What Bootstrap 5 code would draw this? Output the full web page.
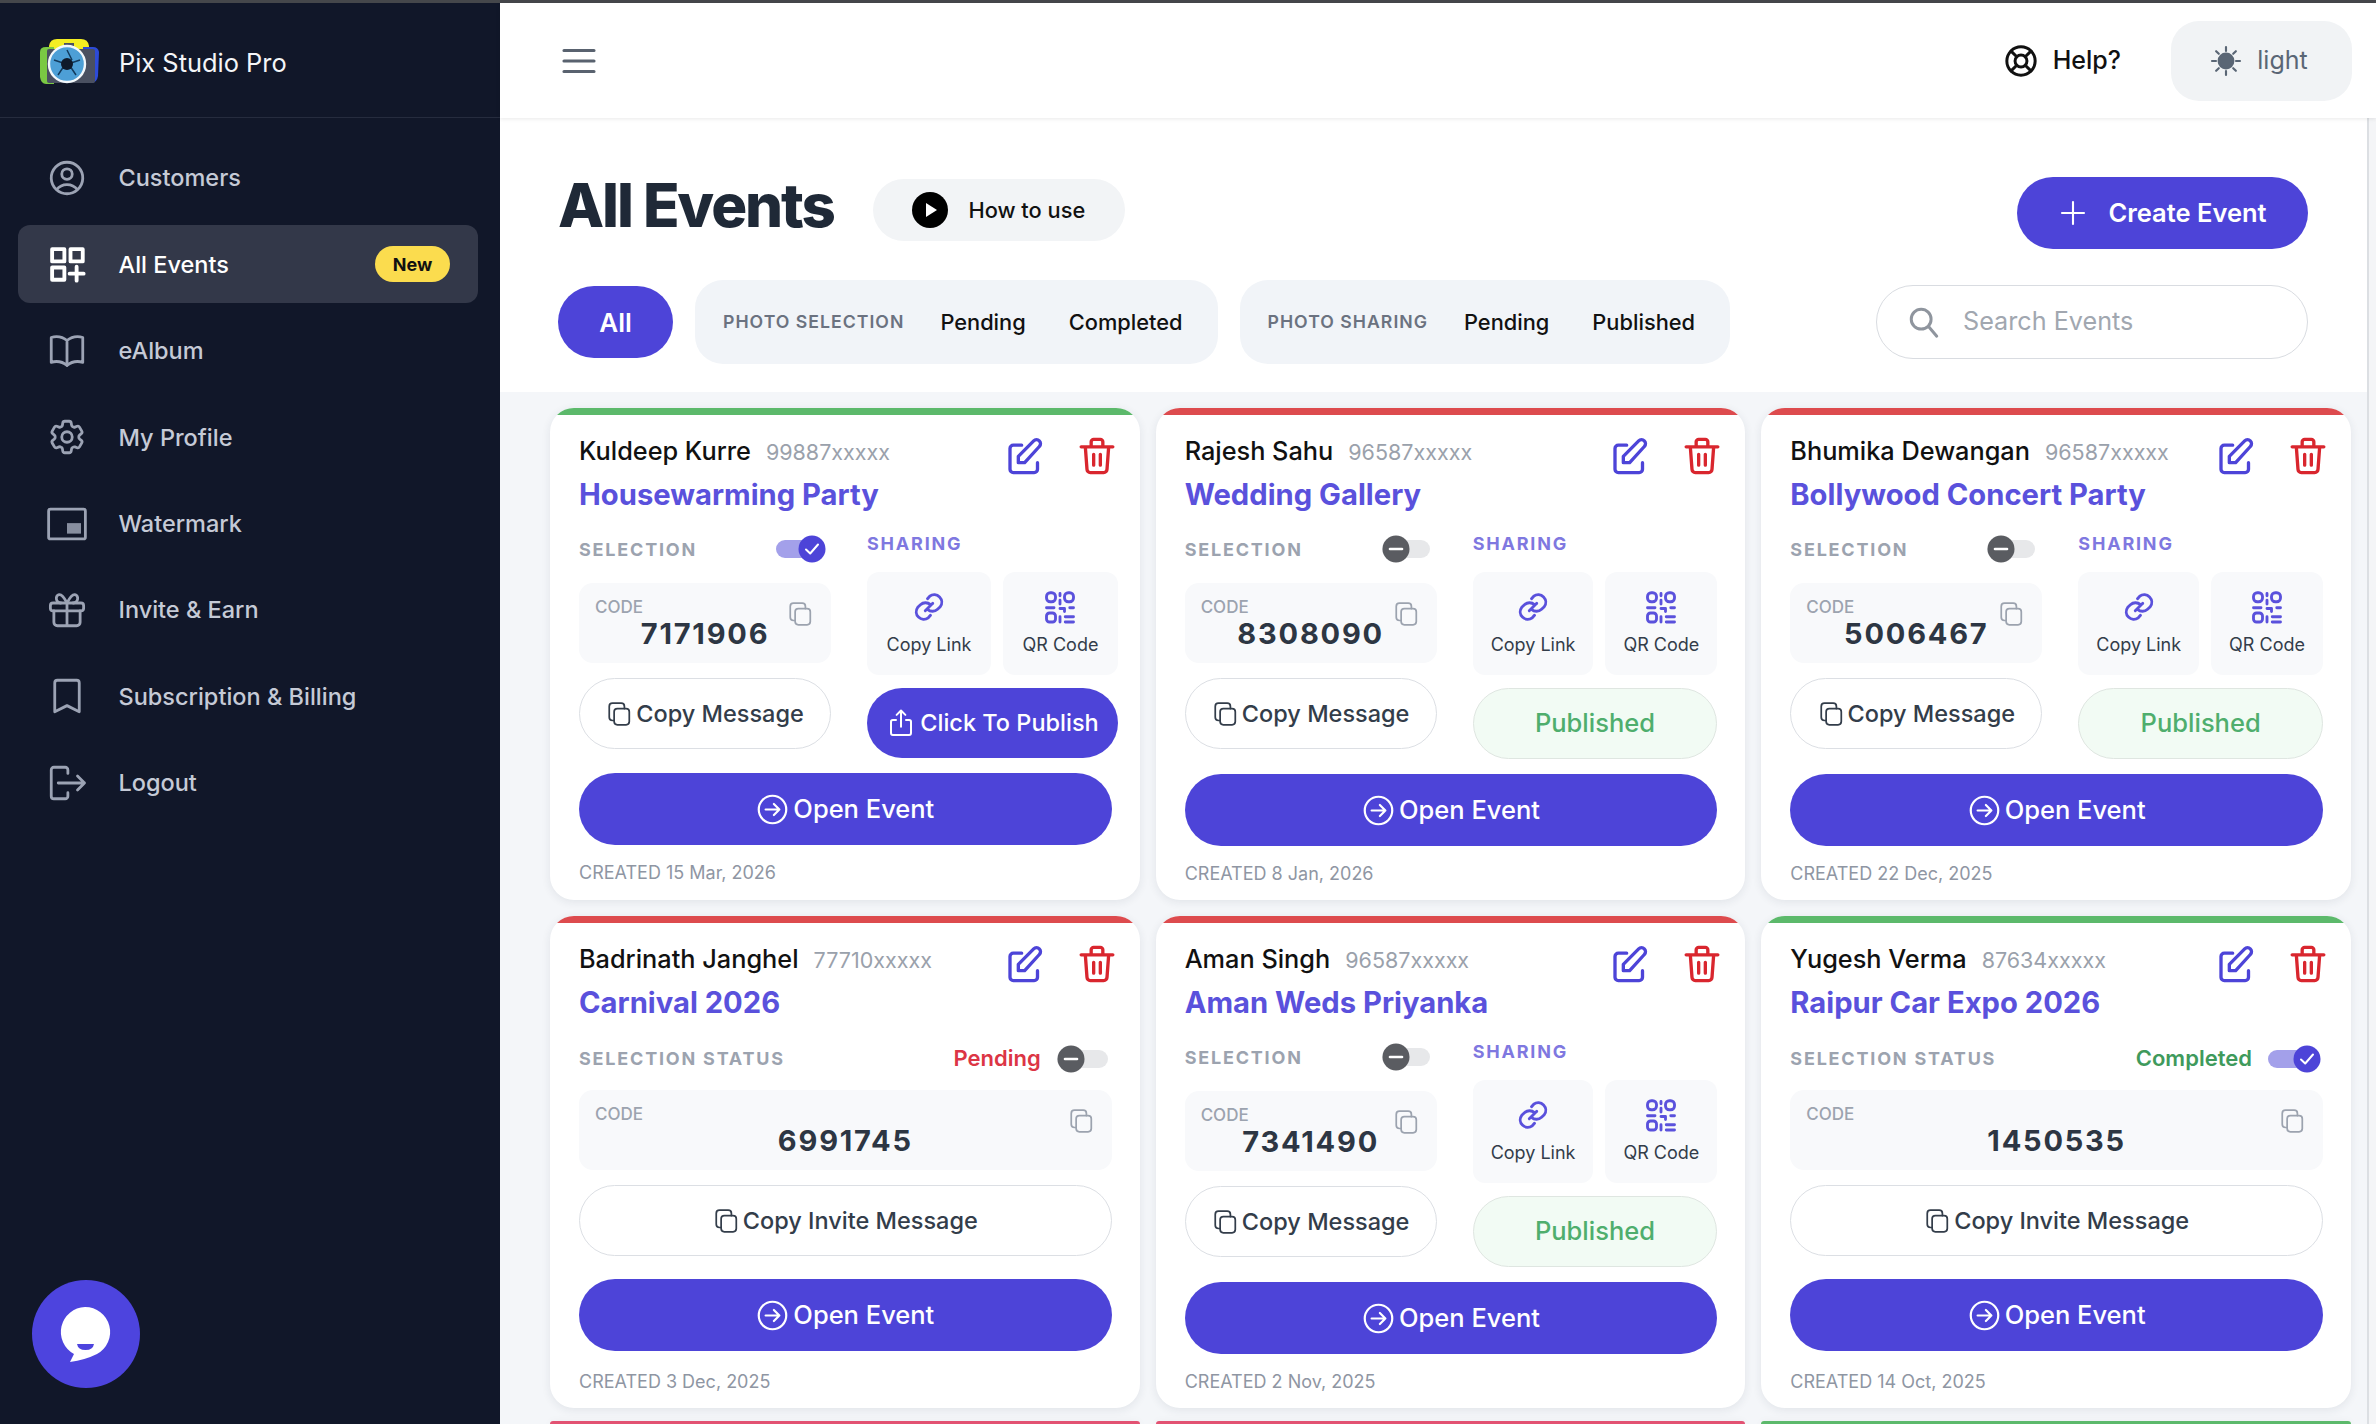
<!DOCTYPE html>
<html lang="en">
<head>
<meta charset="utf-8">
<title>Pix Studio Pro - All Events</title>
<link href="https://cdn.jsdelivr.net/npm/bootstrap@5.3.0/dist/css/bootstrap.min.css" rel="stylesheet">
<style>
html,body{height:100%;overflow:hidden}
body{font-family:Inter,"Liberation Sans",sans-serif;background:#fff;color:#111}
.pz-ico{fill:none;stroke:currentColor;stroke-width:1.6;stroke-linecap:round;stroke-linejoin:round;flex:none}
.pz-thick{stroke-width:2.1}
.pz-topline{height:3px;background:#45474b}
.pz-shell{height:1421px}
.pz-side{width:500px;flex:none;background:#111729;position:relative}
.pz-brand{height:115px;padding:6px 0 0 39px;border-bottom:1px solid #262c3e;gap:20px;color:#f4f5f8;font-size:25.4px;font-weight:400}
.pz-menu{padding:21px 22px 0 18px}
.pz-item{height:78px;margin-bottom:8.4px;padding:0 28px 0 28px;gap:30.5px;color:#c5cad6;font-size:23.5px;font-weight:500;border-radius:12px;text-decoration:none}
.pz-item .pz-ico{width:42px;height:42px;color:#9ca3b4}
.pz-item.pz-on{background:#333849;color:#fff}
.pz-item.pz-on .pz-ico{color:#fff;stroke-width:2.200}
.pz-new{background:#fbdc4e;color:#111;font-size:18px;font-weight:700;border-radius:18px;width:75px;height:36px}
.pz-chat{position:absolute;left:32px;bottom:36px;width:108px;height:108px;border-radius:50%;background:#4d44de}
.pz-chat svg{width:108px;height:108px}
.pz-main{min-width:0;background:#f4f6f9}
.pz-head{height:115px;flex:none;background:#fff;padding:0 24px 0 61px;box-shadow:0 1px 4px rgba(0,0,0,.09);position:relative;z-index:2}
.pz-burger{width:36px;height:36px;color:#59626f;stroke-width:2.100}
.pz-help{font-size:25px;font-weight:500;gap:15px;color:#111;margin-right:50px}
.pz-mode{width:181px;height:80px;background:#f1f3f5;border-radius:28px;gap:15px;font-size:25px;color:#5a6675;padding-right:5px}
.pz-body{min-height:0;overflow:hidden}
.pz-track{width:9px;flex:none;background:#f4f5f7;border-left:2px solid #dcdfe3}
.pz-top{background:#fff;height:274px;padding:54px 59px 0 58px}
.pz-h1{font-size:60px;font-weight:800;letter-spacing:-2.1px;color:#1f2937;margin:0 0 16px;line-height:66px}
.pz-how{width:252px;height:62px;background:#f2f4f6;border-radius:31px;margin:0 0 6px 39px;gap:20px;font-size:21.8px;font-weight:500;color:#111}
.pz-btn-main{background:#4d44d8;color:#fff;border:0;border-radius:36px;font-weight:600}
.pz-create{width:291px;height:72px;font-size:25.5px;gap:20px}
.pz-filters{margin-top:26px}
.pz-all{width:115px;height:72px;font-size:26px;margin-right:22px}
.pz-grp{height:84px;background:#f1f4f8;border-radius:28px;padding:0 35px 0 28px;margin-right:22px;font-size:21.8px;font-weight:500;color:#111}
.pz-grp b{font-size:17.7px;font-weight:600;letter-spacing:1px;color:#6b7280;margin-right:36px}
.pz-grp span+span{margin-left:43px}
.pz-search{width:432px;height:74px;border:1px solid #d9dce1;border-radius:37px;padding-left:30px;gap:22px;font-size:25.2px;color:#a1a7b0;background:#fff}
.pz-search .pz-ico{color:#8f959e}
.pz-grid{padding:16px 16px 0 50px}
.pz-card{background:#fff;border:0;border-radius:24px;overflow:hidden;box-shadow:0 2px 10px rgba(30,40,70,.09);height:492px}
.pz-strip{height:7px}
.pz-green{background:#5cb96b}.pz-red{background:#dd4b4e}.pz-pink{background:#e25272}
.row>.pz-next{margin-top:13px}
.pz-next .pz-card{height:3px;border-radius:24px 24px 0 0}
.pz-in{padding:18px 28px 0 29px}
.pz-nm{font-size:25.3px;font-weight:500;color:#111;line-height:36px;white-space:nowrap}
.pz-ph{font-size:21.5px;font-weight:400;color:#9aa1ab;margin-left:15px}
.pz-ev{font-size:29.2px;font-weight:700;color:#5a51dc;line-height:40px;white-space:nowrap;margin-top:5px}
.pz-acts{gap:32px;padding-top:3px;margin-right:-5px}
.pz-ed{width:40px;height:40px;color:#4d44d8;stroke-width:2}
.pz-tr{width:40px;height:40px;color:#d9262e;stroke-width:2}
.pz-lab{font-size:18px;font-weight:700;letter-spacing:1.8px;color:#9ca3af}
.pz-shr{color:#7f78e0}
.pz-two{margin-top:15px}
.pz-selrow{padding:5px 5px 0 0}
.pz-strow{padding:19px 2px 0 0}
.pz-sw{width:50px;height:28px;position:relative;display:block;flex:none}
.pz-strow .pz-sw{width:53px}
.pz-sw::before{content:"";position:absolute;left:0;right:2px;top:5px;height:18px;border-radius:9px;background:#e7e8ea}
.pz-sw.pz-yes::before{background:#a3a0ea}
.pz-sw svg{position:absolute;top:0;left:0;width:28px;height:28px}
.pz-sw.pz-yes svg{left:auto;right:0}
.pz-lft{width:252px;flex:none}
.pz-rgt{margin-left:36px;flex:1 1 0}
.pz-code{height:80px;background:#f8f9fb;border-radius:14px;padding:12px 16px;position:relative}
.pz-lft .pz-code{margin-top:20px}
.pz-strow+.pz-code{margin-top:15px}
.pz-code small{display:block;font-size:17px;font-weight:500;color:#9ca3af;line-height:24px}
.pz-num{font-size:29px;font-weight:700;letter-spacing:1.8px;color:#2d3643;line-height:36px;text-align:center;margin-top:-3px}
.pz-cp{position:absolute;right:18px;top:18px;width:26px;height:26px;color:#9ca3af}
.pz-outl{height:71px;border:1px solid #dcdfe4;border-radius:36px;background:#fff;font-size:23.5px;font-weight:500;color:#333d4a;gap:4px;margin-top:15px}
.pz-outl .pz-ico{width:26px;height:26px}
.pz-tiles{gap:12px;margin-top:15px}
.pz-tile{height:103px;background:#f8f9fb;border-radius:12px;font-size:18px;font-weight:400;color:#333d4a;gap:6px}
.pz-tile .pz-ico{width:36px;height:36px;color:#5a51dc;stroke-width:1.900}
.pz-pub{height:70px;font-size:23.5px;font-weight:500;gap:4px;white-space:nowrap;min-width:251px;border-radius:35px;margin-top:13px}
.pz-pub .pz-ico{width:30px;height:30px}
.pz-done{height:71px;border:1px solid #dfe6e1;border-radius:36px;background:#f2fbf4;color:#4fae6d;font-size:25.5px;font-weight:500;margin-top:13px}
.pz-open{height:72px;font-size:25.5px;font-weight:500;gap:4px;margin-top:15px}
.pz-solo{margin-top:23px}
.pz-open .pz-ico{width:33px;height:33px}
.pz-dt{font-size:18px;font-weight:400;color:#8f96a3;line-height:24px;margin-top:16px}
.pz-solo+.pz-dt{margin-top:19px}
.pz-st{font-size:22px;font-weight:600;margin-right:16px}
.pz-pend{color:#dc3545}.pz-comp{color:#3f9a5c}
</style>
</head>
<body>
<svg width="0" height="0" class="position-absolute">
<symbol id="i-user" viewBox="0 0 24 24"><path d="M17.98 18.73A7.49 7.49 0 0 0 12 15.75a7.49 7.49 0 0 0-5.98 2.98m11.96 0a9 9 0 1 0-11.96 0m11.96 0A8.97 8.97 0 0 1 12 21a8.97 8.97 0 0 1-5.98-2.27M15 9.75a3 3 0 1 1-6 0 3 3 0 0 1 6 0z"/></symbol>
<symbol id="i-grid" viewBox="0 0 24 24"><rect x="3.500" y="3.500" width="7" height="7"/><rect x="14" y="3.500" width="7" height="7"/><rect x="3.500" y="14" width="7" height="7"/><path d="M17.500 13.500v8M13.500 17.500h8"/></symbol>
<symbol id="i-book" viewBox="0 0 24 24"><path d="M12 6.04A8.97 8.97 0 0 0 6 3.75c-1.05 0-2.06.18-3 .51v14.25A8.99 8.99 0 0 1 6 18c2.3 0 4.41.87 6 2.29m0-14.25a8.97 8.97 0 0 1 6-2.29c1.05 0 2.06.18 3 .51v14.25A8.99 8.99 0 0 0 18 18a8.97 8.97 0 0 0-6 2.29m0-14.25v14.25"/></symbol>
<symbol id="i-cog" viewBox="0 0 24 24"><path d="M9.59 3.94c.09-.54.56-.94 1.11-.94h2.59c.55 0 1.02.4 1.11.94l.21 1.28c.06.37.31.69.65.87.07.04.15.08.22.13.32.2.72.26 1.07.12l1.22-.45a1.13 1.13 0 0 1 1.37.49l1.3 2.25a1.13 1.13 0 0 1-.26 1.43l-1 .83c-.3.24-.44.61-.43.99v.26c-.01.38.13.75.43.99l1 .83c.42.35.53.95.26 1.43l-1.3 2.25a1.13 1.13 0 0 1-1.37.49l-1.22-.46c-.35-.13-.75-.07-1.07.13l-.22.12c-.34.19-.59.5-.65.87l-.21 1.28c-.09.54-.56.94-1.11.94H10.7c-.55 0-1.02-.4-1.11-.94l-.21-1.28c-.06-.37-.31-.69-.65-.87l-.22-.13c-.32-.2-.72-.26-1.07-.12l-1.22.46a1.13 1.13 0 0 1-1.37-.49l-1.3-2.25a1.13 1.13 0 0 1 .26-1.43l1-.83c.3-.24.44-.61.43-.99v-.26c.01-.38-.13-.75-.43-.99l-1-.83a1.13 1.13 0 0 1-.26-1.43l1.3-2.25a1.13 1.13 0 0 1 1.37-.49l1.22.46c.35.13.75.07 1.07-.13l.22-.12c.34-.19.59-.5.65-.87z"/><circle cx="12" cy="12" r="3"/></symbol>
<symbol id="i-wm" viewBox="0 0 24 24"><rect x="1.500" y="3.500" width="21" height="17" rx="1"/><rect x="12" y="11.500" width="8" height="6" fill="currentColor" stroke="none" opacity=".85"/></symbol>
<symbol id="i-gift" viewBox="0 0 24 24"><rect x="2.500" y="8" width="19" height="4.500" rx="1.500"/><path d="M4.500 12.500V19a2 2 0 0 0 2 2h11a2 2 0 0 0 2-2v-6.500M12 8v13M12 8C10.500 5 9 3 7.500 3.200 5 3.600 5.500 8 8.500 8M12 8c1.500-3 3-5 4.500-4.800 2.500.4 2 4.800-1 4.800"/></symbol>
<symbol id="i-mark" viewBox="0 0 24 24"><path d="M5 4.500A1.500 1.500 0 0 1 6.500 3h11A1.500 1.500 0 0 1 19 4.500V21l-7-3.500L5 21z"/></symbol>
<symbol id="i-out" viewBox="0 0 24 24"><path d="M12.500 6.500V4.500A1.500 1.500 0 0 0 11 3H4.500A1.500 1.500 0 0 0 3 4.500v15A1.500 1.500 0 0 0 4.500 21H11a1.500 1.500 0 0 0 1.500-1.500v-2M7 12h15M18 8l4 4-4 4"/></symbol>
<symbol id="i-help" viewBox="0 0 24 24"><circle cx="12" cy="12" r="10"/><circle cx="12" cy="12" r="4.200"/><path d="M5 5l4 4M19 5l-4 4M5 19l4-4M19 19l-4-4"/></symbol>
<symbol id="i-sun" viewBox="0 0 24 24"><circle cx="12" cy="12" r="5.500" fill="currentColor"/><path d="M12 1.500v3M12 19.500v3M1.500 12h3M19.500 12h3M4.600 4.600l2 2M17.400 17.400l2 2M4.600 19.400l2-2M17.400 6.600l2-2"/></symbol>
<symbol id="i-edit" viewBox="0 0 24 24"><path d="M10 5.500H5a2 2 0 0 0-2 2V20a2 2 0 0 0 2 2h12.500a2 2 0 0 0 2-2v-4"/><path d="M20.600 6.300a2.400 2.400 0 0 0-3.400-3.400L8 12.200V16h3.800z"/></symbol>
<symbol id="i-trash" viewBox="0 0 24 24"><path d="M2.500 6.500h19M5 6.500l1 13.500a2 2 0 0 0 2 2h8a2 2 0 0 0 2-2l1-13.500M8.500 6.500V3.500a1.500 1.500 0 0 1 1.500-1.500h4a1.500 1.500 0 0 1 1.500 1.500v3M10 11v6.500M14 11v6.500"/></symbol>
<symbol id="i-link" viewBox="0 0 24 24"><path d="M9.500 14.500l5-5"/><path d="M11 6.500l1.500-1.700a5 5 0 0 1 7 7l-1.800 1.700a5 5 0 0 1-6.700.1"/><path d="M13 17.500l-1.500 1.700a5 5 0 0 1-7-7l1.800-1.700a5 5 0 0 1 6.700-.1"/></symbol>
<symbol id="i-qr" viewBox="0 0 24 24"><rect x="3" y="2.500" width="6" height="6" rx="2.500"/><rect x="15" y="2.500" width="6" height="6" rx="2.500"/><rect x="3" y="16" width="6" height="6" rx="2"/><path d="M12 3v1.500M12 7.500v2.500M3 12.500h5M12 13h3v2M18.500 12.500h2.500M12 18.500v3.500M15.500 18.500H21M15.500 22H21"/></symbol>
<symbol id="i-copy" viewBox="0 0 24 24"><rect x="7.500" y="7" width="14" height="15" rx="3"/><path d="M17 7V5a3 3 0 0 0-3-3H6a3 3 0 0 0-3 3v10a3 3 0 0 0 3 3h1.500"/></symbol>
<symbol id="i-up" viewBox="0 0 24 24"><path d="M8 9.500H5.500a1.500 1.500 0 0 0-1.500 1.500v9a1.500 1.500 0 0 0 1.500 1.500h13a1.500 1.500 0 0 0 1.500-1.500v-9a1.500 1.500 0 0 0-1.500-1.500H16M12 15V2M8.500 5.500L12 2l3.500 3.500"/></symbol>
<symbol id="i-go" viewBox="0 0 24 24"><circle cx="12" cy="12" r="10"/><path d="M7 12h10M13 8l4 4-4 4"/></symbol>
<symbol id="i-on" viewBox="0 0 28 28"><circle cx="14" cy="14" r="13.500" fill="#4d44d8"/><path d="M8 14.500l4.200 4L20 9.500" fill="none" stroke="#fff" stroke-width="2" stroke-linecap="round" stroke-linejoin="round"/></symbol>
<symbol id="i-off" viewBox="0 0 28 28"><circle cx="14" cy="14" r="13.500" fill="#5a5c61"/><path d="M8 14h12" fill="none" stroke="#fff" stroke-width="2.600" stroke-linecap="round"/></symbol>
</svg>

<div class="pz-topline"></div>
<div class="d-flex pz-shell">
  <aside class="pz-side d-flex flex-column">
    <div class="pz-brand d-flex align-items-center">
      <svg width="60" height="50" viewBox="0 0 60 50">
        <path d="M10 8q1-7 8-7h24q7 0 8 7l-2 34H12z" fill="#f4ee22"/>
        <path d="M1 14q0-5 6-5h8v37H7q-5 0-6-7z" fill="#7ac943"/>
        <path d="M44 9h10q5 0 6 5l-1 24q-1 6-6 7H44z" fill="#2d4bd8"/>
        <rect x="8" y="11" width="48" height="34" rx="2" fill="#4a5061"/>
        <rect x="25" y="5" width="10" height="5" fill="#4a5061"/>
        <circle cx="28" cy="26" r="18" fill="#4d9fd6" stroke="#f2f7fb" stroke-width="2.400"/>
        <path d="M28 12l5 10M41 22l-9 3M37 37l-6-9M19 37l6-9M15 22l9 3" stroke="#123a5c" stroke-width="1.500" fill="none"/>
        <circle cx="28" cy="26" r="6" fill="#0f1a2a"/>
      </svg>
      <span>Pix Studio Pro</span>
    </div>
    <nav class="pz-menu">
      <a class="pz-item d-flex align-items-center" href="#"><svg class="pz-ico"><use href="#i-user"/></svg><span>Customers</span></a>
      <a class="pz-item pz-on d-flex align-items-center" href="#"><svg class="pz-ico"><use href="#i-grid"/></svg><span class="flex-grow-1">All Events</span><span class="pz-new d-flex align-items-center justify-content-center">New</span></a>
      <a class="pz-item d-flex align-items-center" href="#"><svg class="pz-ico"><use href="#i-book"/></svg><span>eAlbum</span></a>
      <a class="pz-item d-flex align-items-center" href="#"><svg class="pz-ico"><use href="#i-cog"/></svg><span>My Profile</span></a>
      <a class="pz-item d-flex align-items-center" href="#"><svg class="pz-ico"><use href="#i-wm"/></svg><span>Watermark</span></a>
      <a class="pz-item d-flex align-items-center" href="#"><svg class="pz-ico"><use href="#i-gift"/></svg><span>Invite &amp; Earn</span></a>
      <a class="pz-item d-flex align-items-center" href="#"><svg class="pz-ico"><use href="#i-mark"/></svg><span>Subscription &amp; Billing</span></a>
      <a class="pz-item d-flex align-items-center" href="#"><svg class="pz-ico"><use href="#i-out"/></svg><span>Logout</span></a>
    </nav>
    <div class="pz-chat">
      <svg viewBox="0 0 108 108"><path d="M53 27a25 25 0 0 1 12 47q-12 6-27 8l4-8a25 25 0 0 1 11-47z" fill="#fff"/><path d="M45 64h17q-1 6-8.500 6T45 64z" fill="#4d44de"/></svg>
    </div>
  </aside>

  <div class="pz-main flex-grow-1 d-flex flex-column">
    <header class="pz-head d-flex align-items-center">
      <svg class="pz-burger pz-ico me-auto" viewBox="0 0 24 24"><path d="M2 5h20M2 12h20M2 19h20"/></svg>
      <div class="pz-help d-flex align-items-center"><svg class="pz-ico pz-thick" width="34" height="34"><use href="#i-help"/></svg><span>Help?</span></div>
      <div class="pz-mode d-flex align-items-center justify-content-center"><svg class="pz-ico" width="32" height="32"><use href="#i-sun"/></svg><span>light</span></div>
    </header>
    <div class="pz-body d-flex flex-grow-1">
      <div class="flex-grow-1" style="min-width:0">
        <section class="pz-top">
          <div class="d-flex align-items-center">
            <h1 class="pz-h1">All Events</h1>
            <div class="pz-how d-flex align-items-center justify-content-center">
              <svg width="36" height="36" viewBox="0 0 36 36"><circle cx="18" cy="18" r="18" fill="#000"/><path d="M14 11l11 7-11 7z" fill="#fff"/></svg><span>How to use</span>
            </div>
            <button class="btn pz-btn-main pz-create ms-auto d-flex align-items-center justify-content-center"><svg class="pz-ico pz-thick" width="30" height="30"><path d="M4 15h22M15 4v22"/></svg><span>Create Event</span></button>
          </div>
          <div class="pz-filters d-flex align-items-center">
            <button class="btn pz-btn-main pz-all">All</button>
            <div class="pz-grp d-flex align-items-center"><b>PHOTO SELECTION</b><span>Pending</span><span>Completed</span></div>
            <div class="pz-grp d-flex align-items-center"><b>PHOTO SHARING</b><span>Pending</span><span>Published</span></div>
            <div class="pz-search ms-auto d-flex align-items-center"><svg class="pz-ico pz-thick" width="34" height="34" viewBox="0 0 24 24"><circle cx="10" cy="10" r="7"/><path d="M15.500 15.500L21 22"/></svg><span>Search Events</span></div>
          </div>
        </section>

        <section class="pz-grid">
          <div class="row row-cols-3 g-3">
            <!-- 1 -->
            <div class="col"><div class="card pz-card"><div class="pz-strip pz-green"></div><div class="pz-in">
              <div class="d-flex justify-content-between"><div><div class="pz-nm">Kuldeep Kurre<span class="pz-ph">99887xxxxx</span></div><div class="pz-ev">Housewarming Party</div></div><div class="pz-acts d-flex"><svg class="pz-ico pz-ed"><use href="#i-edit"/></svg><svg class="pz-ico pz-tr"><use href="#i-trash"/></svg></div></div>
              <div class="d-flex pz-two">
                <div class="pz-lft">
                  <div class="d-flex align-items-center justify-content-between pz-selrow"><span class="pz-lab">SELECTION</span><span class="pz-sw pz-yes"><svg><use href="#i-on"/></svg></span></div>
                  <div class="pz-code"><small>CODE</small><div class="pz-num">7171906</div><svg class="pz-ico pz-cp"><use href="#i-copy"/></svg></div>
                  <div class="pz-outl d-flex align-items-center justify-content-center"><svg class="pz-ico"><use href="#i-copy"/></svg>Copy Message</div>
                </div>
                <div class="pz-rgt">
                  <div class="pz-lab pz-shr">SHARING</div>
                  <div class="d-flex pz-tiles"><div class="pz-tile flex-fill d-flex flex-column align-items-center justify-content-center"><svg class="pz-ico"><use href="#i-link"/></svg>Copy Link</div><div class="pz-tile flex-fill d-flex flex-column align-items-center justify-content-center"><svg class="pz-ico"><use href="#i-qr"/></svg>QR Code</div></div>
                  <button class="btn pz-btn-main pz-pub d-flex align-items-center justify-content-center w-100"><svg class="pz-ico"><use href="#i-up"/></svg>Click To Publish</button>
                </div>
              </div>
              <button class="btn pz-btn-main pz-open w-100 d-flex align-items-center justify-content-center"><svg class="pz-ico"><use href="#i-go"/></svg>Open Event</button>
              <div class="pz-dt">CREATED 15 Mar, 2026</div>
            </div></div></div>
            <!-- 2 -->
            <div class="col"><div class="card pz-card"><div class="pz-strip pz-red"></div><div class="pz-in">
              <div class="d-flex justify-content-between"><div><div class="pz-nm">Rajesh Sahu<span class="pz-ph">96587xxxxx</span></div><div class="pz-ev">Wedding Gallery</div></div><div class="pz-acts d-flex"><svg class="pz-ico pz-ed"><use href="#i-edit"/></svg><svg class="pz-ico pz-tr"><use href="#i-trash"/></svg></div></div>
              <div class="d-flex pz-two">
                <div class="pz-lft">
                  <div class="d-flex align-items-center justify-content-between pz-selrow"><span class="pz-lab">SELECTION</span><span class="pz-sw"><svg><use href="#i-off"/></svg></span></div>
                  <div class="pz-code"><small>CODE</small><div class="pz-num">8308090</div><svg class="pz-ico pz-cp"><use href="#i-copy"/></svg></div>
                  <div class="pz-outl d-flex align-items-center justify-content-center"><svg class="pz-ico"><use href="#i-copy"/></svg>Copy Message</div>
                </div>
                <div class="pz-rgt">
                  <div class="pz-lab pz-shr">SHARING</div>
                  <div class="d-flex pz-tiles"><div class="pz-tile flex-fill d-flex flex-column align-items-center justify-content-center"><svg class="pz-ico"><use href="#i-link"/></svg>Copy Link</div><div class="pz-tile flex-fill d-flex flex-column align-items-center justify-content-center"><svg class="pz-ico"><use href="#i-qr"/></svg>QR Code</div></div>
                  <div class="pz-done d-flex align-items-center justify-content-center">Published</div>
                </div>
              </div>
              <button class="btn pz-btn-main pz-open w-100 d-flex align-items-center justify-content-center"><svg class="pz-ico"><use href="#i-go"/></svg>Open Event</button>
              <div class="pz-dt">CREATED 8 Jan, 2026</div>
            </div></div></div>
            <!-- 3 -->
            <div class="col"><div class="card pz-card"><div class="pz-strip pz-red"></div><div class="pz-in">
              <div class="d-flex justify-content-between"><div><div class="pz-nm">Bhumika Dewangan<span class="pz-ph">96587xxxxx</span></div><div class="pz-ev">Bollywood Concert Party</div></div><div class="pz-acts d-flex"><svg class="pz-ico pz-ed"><use href="#i-edit"/></svg><svg class="pz-ico pz-tr"><use href="#i-trash"/></svg></div></div>
              <div class="d-flex pz-two">
                <div class="pz-lft">
                  <div class="d-flex align-items-center justify-content-between pz-selrow"><span class="pz-lab">SELECTION</span><span class="pz-sw"><svg><use href="#i-off"/></svg></span></div>
                  <div class="pz-code"><small>CODE</small><div class="pz-num">5006467</div><svg class="pz-ico pz-cp"><use href="#i-copy"/></svg></div>
                  <div class="pz-outl d-flex align-items-center justify-content-center"><svg class="pz-ico"><use href="#i-copy"/></svg>Copy Message</div>
                </div>
                <div class="pz-rgt">
                  <div class="pz-lab pz-shr">SHARING</div>
                  <div class="d-flex pz-tiles"><div class="pz-tile flex-fill d-flex flex-column align-items-center justify-content-center"><svg class="pz-ico"><use href="#i-link"/></svg>Copy Link</div><div class="pz-tile flex-fill d-flex flex-column align-items-center justify-content-center"><svg class="pz-ico"><use href="#i-qr"/></svg>QR Code</div></div>
                  <div class="pz-done d-flex align-items-center justify-content-center">Published</div>
                </div>
              </div>
              <button class="btn pz-btn-main pz-open w-100 d-flex align-items-center justify-content-center"><svg class="pz-ico"><use href="#i-go"/></svg>Open Event</button>
              <div class="pz-dt">CREATED 22 Dec, 2025</div>
            </div></div></div>
            <!-- 4 -->
            <div class="col"><div class="card pz-card"><div class="pz-strip pz-red"></div><div class="pz-in">
              <div class="d-flex justify-content-between"><div><div class="pz-nm">Badrinath Janghel<span class="pz-ph">77710xxxxx</span></div><div class="pz-ev">Carnival 2026</div></div><div class="pz-acts d-flex"><svg class="pz-ico pz-ed"><use href="#i-edit"/></svg><svg class="pz-ico pz-tr"><use href="#i-trash"/></svg></div></div>
              <div class="d-flex align-items-center pz-strow"><span class="pz-lab me-auto">SELECTION STATUS</span><span class="pz-st pz-pend">Pending</span><span class="pz-sw"><svg><use href="#i-off"/></svg></span></div>
              <div class="pz-code"><small>CODE</small><div class="pz-num">6991745</div><svg class="pz-ico pz-cp"><use href="#i-copy"/></svg></div>
              <div class="pz-outl d-flex align-items-center justify-content-center"><svg class="pz-ico"><use href="#i-copy"/></svg>Copy Invite Message</div>
              <button class="btn pz-btn-main pz-open pz-solo w-100 d-flex align-items-center justify-content-center"><svg class="pz-ico"><use href="#i-go"/></svg>Open Event</button>
              <div class="pz-dt">CREATED 3 Dec, 2025</div>
            </div></div></div>
            <!-- 5 -->
            <div class="col"><div class="card pz-card"><div class="pz-strip pz-red"></div><div class="pz-in">
              <div class="d-flex justify-content-between"><div><div class="pz-nm">Aman Singh<span class="pz-ph">96587xxxxx</span></div><div class="pz-ev">Aman Weds Priyanka</div></div><div class="pz-acts d-flex"><svg class="pz-ico pz-ed"><use href="#i-edit"/></svg><svg class="pz-ico pz-tr"><use href="#i-trash"/></svg></div></div>
              <div class="d-flex pz-two">
                <div class="pz-lft">
                  <div class="d-flex align-items-center justify-content-between pz-selrow"><span class="pz-lab">SELECTION</span><span class="pz-sw"><svg><use href="#i-off"/></svg></span></div>
                  <div class="pz-code"><small>CODE</small><div class="pz-num">7341490</div><svg class="pz-ico pz-cp"><use href="#i-copy"/></svg></div>
                  <div class="pz-outl d-flex align-items-center justify-content-center"><svg class="pz-ico"><use href="#i-copy"/></svg>Copy Message</div>
                </div>
                <div class="pz-rgt">
                  <div class="pz-lab pz-shr">SHARING</div>
                  <div class="d-flex pz-tiles"><div class="pz-tile flex-fill d-flex flex-column align-items-center justify-content-center"><svg class="pz-ico"><use href="#i-link"/></svg>Copy Link</div><div class="pz-tile flex-fill d-flex flex-column align-items-center justify-content-center"><svg class="pz-ico"><use href="#i-qr"/></svg>QR Code</div></div>
                  <div class="pz-done d-flex align-items-center justify-content-center">Published</div>
                </div>
              </div>
              <button class="btn pz-btn-main pz-open w-100 d-flex align-items-center justify-content-center"><svg class="pz-ico"><use href="#i-go"/></svg>Open Event</button>
              <div class="pz-dt">CREATED 2 Nov, 2025</div>
            </div></div></div>
            <!-- 6 -->
            <div class="col"><div class="card pz-card"><div class="pz-strip pz-green"></div><div class="pz-in">
              <div class="d-flex justify-content-between"><div><div class="pz-nm">Yugesh Verma<span class="pz-ph">87634xxxxx</span></div><div class="pz-ev">Raipur Car Expo 2026</div></div><div class="pz-acts d-flex"><svg class="pz-ico pz-ed"><use href="#i-edit"/></svg><svg class="pz-ico pz-tr"><use href="#i-trash"/></svg></div></div>
              <div class="d-flex align-items-center pz-strow"><span class="pz-lab me-auto">SELECTION STATUS</span><span class="pz-st pz-comp">Completed</span><span class="pz-sw pz-yes"><svg><use href="#i-on"/></svg></span></div>
              <div class="pz-code"><small>CODE</small><div class="pz-num">1450535</div><svg class="pz-ico pz-cp"><use href="#i-copy"/></svg></div>
              <div class="pz-outl d-flex align-items-center justify-content-center"><svg class="pz-ico"><use href="#i-copy"/></svg>Copy Invite Message</div>
              <button class="btn pz-btn-main pz-open pz-solo w-100 d-flex align-items-center justify-content-center"><svg class="pz-ico"><use href="#i-go"/></svg>Open Event</button>
              <div class="pz-dt">CREATED 14 Oct, 2025</div>
            </div></div></div>
            <!-- next row, only its top edge is in view -->
            <div class="col pz-next"><div class="card pz-card"><div class="pz-strip pz-pink"></div></div></div>
            <div class="col pz-next"><div class="card pz-card"><div class="pz-strip pz-pink"></div></div></div>
            <div class="col pz-next"><div class="card pz-card"><div class="pz-strip pz-green"></div></div></div>
          </div>
        </section>
      </div>
      <div class="pz-track"></div>
    </div>
  </div>
</div>
</body>
</html>
